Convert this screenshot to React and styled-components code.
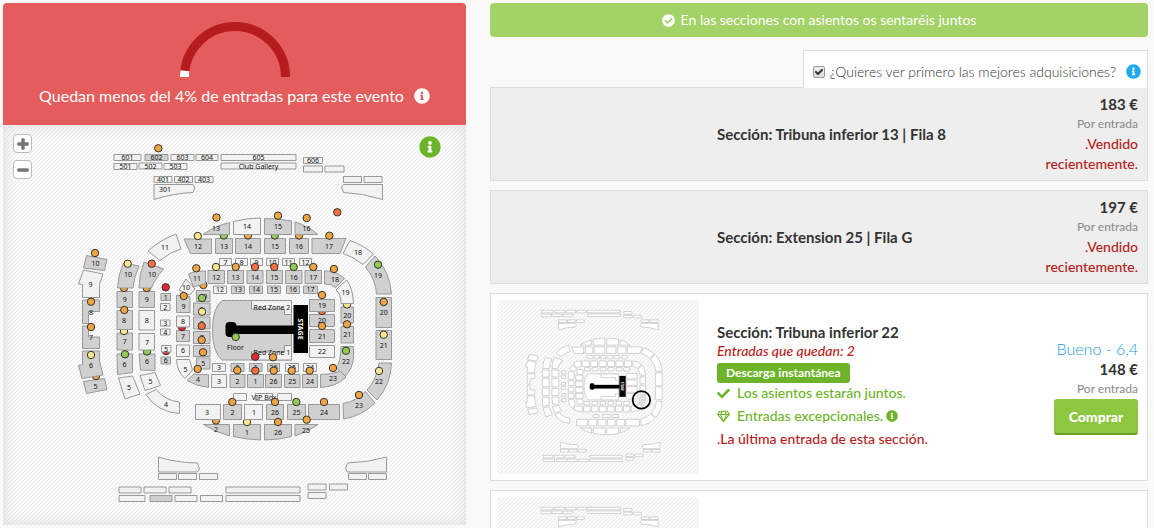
import React from "react";
import styled, { createGlobalStyle } from "styled-components";
import {
  FaCheck,
  FaCheckCircle,
  FaInfoCircle,
  FaMinus,
  FaPlus,
  FaRegGem,
} from "react-icons/fa";

const GlobalStyle = createGlobalStyle`
  body {
    margin: 0;
    background-color: #f9f9f9;
    color: #333;
    font-family: Lato, "Noto Sans", sans-serif;
    font-size: 14px;
    line-height: 20px;
  }

  * {
    box-sizing: border-box;
  }
`;

const colors = {
  o: "#f0a540",
  y: "#fde68c",
  g: "#92cc54",
  t: "#f9703e",
  r: "#e3262f",
};

// [x, y, width, height, label, sold by us]
const blocks = [
  [114, 154.5, 27, 6, "601"],
  [145, 154.5, 23, 6, "602", true],
  [171, 154.5, 23, 6, "603"],
  [196, 154.5, 22, 6, "604"],
  [221, 154.5, 75, 6, "605"],
  [114, 163.5, 23, 6, "501"],
  [139, 163, 23, 6, "502"],
  [164, 163.5, 23, 6, "503"],
  [221, 163, 75, 6, "Club Gallery"],
  [303.5, 157.5, 19, 6, "606"],
  [303.5, 166, 19, 6],
  [325, 166, 19, 6],
  [154, 176.5, 18, 6, "401"],
  [174.5, 176.5, 18, 6, "402"],
  [195, 176.5, 18, 6, "403"],
  [343.5, 176.5, 18, 6],
  [364, 176.5, 18, 6],
  [158.5, 473.5, 18, 6],
  [178.5, 473.5, 18, 6],
  [199.5, 473.5, 18, 6],
  [119, 487, 22, 6],
  [144, 487, 22, 6],
  [169, 487, 22, 6],
  [119, 495.5, 26, 6],
  [150, 495.5, 22, 6, "", true],
  [175, 495.5, 22, 6],
  [200.5, 495.5, 22, 6],
  [226, 487, 74, 6],
  [226, 495.5, 74, 6],
  [308, 484, 18, 6],
  [329.5, 484, 18, 6],
  [308, 492.5, 18, 6],
  [348.5, 473.5, 18, 6],
  [368.5, 473.5, 18, 6],
  [215.5, 238.5, 17, 15, "13", true],
  [235.5, 238.5, 25, 15, "14", true],
  [264.5, 238.5, 21, 15, "15", true],
  [289.5, 238.5, 19, 15, "16", true],
  [376, 297.5, 15.5, 30, "20", true],
  [376, 330.5, 15.5, 29, "21", true],
  [308.5, 404.5, 31, 15, "24", true],
  [287.5, 404.5, 18, 15, "25", true],
  [266.5, 404.5, 17, 15, "26", true],
  [223.5, 404.5, 18, 15, "2", true],
  [117, 291.5, 15.5, 16, "9", true],
  [117, 333, 15.5, 17, "7", true],
  [139, 291.5, 15.5, 16, "9", true],
  [139, 310.5, 15.5, 19.5, "8"],
  [161, 293.5, 9.5, 7, "1", true],
  [160.5, 303.5, 9.5, 7, "2"],
  [160.5, 320, 9.5, 6, "3"],
  [160.5, 329, 9.5, 6, "4"],
  [161, 357, 9.5, 7, "6", true],
  [176.5, 330.5, 13, 11, "7", true],
  [176.5, 345, 13, 11.5, "6"],
  [196.5, 290.5, 13.5, 11, "10", true],
  [193.5, 303, 16.5, 12, "9", true],
  [193.5, 317, 16.5, 12, "8", true],
  [193.5, 331.5, 16.5, 12, "7", true],
  [193.5, 345.5, 16.5, 11, "6", true],
  [196.5, 358, 13.5, 11, "5", true],
  [219.5, 258.5, 12, 7, "7"],
  [235.5, 258.5, 12, 7, "8"],
  [250.5, 258.5, 12, 7, "9"],
  [266.5, 258.5, 12, 7, "10"],
  [282.5, 258.5, 12, 7, "11"],
  [299.5, 258.5, 12, 7, "12"],
  [208, 270.5, 16.5, 13, "12", true],
  [227.5, 270.5, 16, 13, "13", true],
  [247, 270.5, 16, 13, "14", true],
  [266.5, 270.5, 16, 13, "15", true],
  [285.5, 270.5, 16.5, 13, "16", true],
  [305, 270.5, 16.5, 13, "17", true],
  [213.5, 286, 13, 7.5, "12"],
  [231.5, 286, 13, 7.5, "13", true],
  [249.5, 286, 13, 7.5, "14", true],
  [267.5, 286, 13, 7.5, "15", true],
  [286.5, 286, 13, 7.5, "16", true],
  [303.5, 286, 14, 7.5, "17", true],
  [309.5, 314.5, 25, 12, "20", true],
  [309.5, 329.5, 25, 13, "21", true],
  [309.5, 345.5, 25, 12, "22"],
  [341, 307, 12.5, 16, "20", true],
  [341, 326.5, 12.5, 16.5, "21", true],
  [302.5, 374.5, 15, 13, "24", true],
  [284.5, 374.5, 15.5, 13, "25", true],
  [265.5, 374.5, 16, 13, "26", true],
  [247.5, 374.5, 16, 13, "1", true],
  [230, 374.5, 15, 13, "2", true],
  [211.5, 374.5, 15, 13, "3"],
  [212.5, 363.5, 13, 8, "3"],
  [231, 363.5, 13, 8, "2", true],
  [249.5, 363.5, 12.5, 8, "1", true],
  [267.5, 363.5, 12, 8, "26", true],
  [285.5, 363.5, 13, 8, "25"],
  [303.5, 363.5, 13, 8, "24"],
  [233.5, 393.5, 13, 7],
  [255.5, 393.5, 17, 7, "VIP Box"],
  [277.5, 393.5, 14, 7],
];

// [path, label, label x, label y, sold by us]
const shapes = [
  ["M154 184.5H193L195 188L193 192.5Q175 193 154 199.5Z", "301", 165, 189],
  ["M382.5 184.5H343.5L341.5 187L343.5 192.5Q362 193 382.5 199.5Z"],
  ["M158.5 457Q175 462.5 197.5 463L199.5 469L197.5 472H158.5Z"],
  ["M386.5 457Q368 462.5 347.5 463L345.5 469L347.5 472H386.5Z"],
  ["M184 239H211.5V253.5H190.5Z", "12", 198, 246, true],
  ["M312 238.5H346L340 253.5H312Z", "17", 329, 246, true],
  ["M350 240.5Q363 245 373.5 254L363 264.5Q354 257 343 253.5Z", "18", 358, 252],
  ["M375 256Q390 272 391.5 294H376.5Q376 280 365.5 267Z", "19", 378, 275, true],
  ["M379 363H391.5Q391 384 377 400L367 390Q377 379 379 363Z", "22", 379, 381, true],
  ["M343 403.5Q357 401 365.5 391.5L375 403Q362 416 343.5 419Z", "23", 359, 405, true],
  ["M203.5 424.5H229.5V436Q215 432 203.5 424.5Z", "2", 216, 429, true],
  ["M233.5 424.5H260.5V440Q246 439.5 233.5 436.5Z", "1", 247, 432, true],
  ["M264.5 424.5H291.5V436.5Q278 440 264.5 440Z", "26", 278, 432, true],
  ["M295 424.5H318Q308 432 295 436Z", "25", 306, 430, true],
  ["M148 251Q160 240 176 234L181 249Q170 252 160 260.5Z", "11", 165, 247],
  ["M117 354H132.5V372.5L117.5 374.5Z", "6", 124.5, 364, true],
  ["M139 354H155V370.5L140.5 370Z", "6", 147, 361, true],
  ["M118.5 378L132.5 376L140 394L125 399Z", "5", 129, 387],
  ["M140 375.5L155 372.5L160.5 385.5L145 390.5Z", "5", 150.5, 381],
  ["M146 394.5L156 389.5Q166 401 179.5 402V413.5Q157 412 146 394.5Z", "4", 166, 404],
  ["M86.5 255.5L107 259.5L104.5 270.5L83.5 268Z", "10", 95.5, 263, true],
  ["M83.5 270L103 274L99.5 284.5V297.5H82.5V284.5L78.5 284Z", "9", 90.5, 284],
  ["M82.5 300H99.5V311.5H88.5V323.5H82.5Z", "8", 91, 312, true],
  ["M82.5 326H88.5V337H99.5V348.5H82.5Z", "7", 91, 337, true],
  ["M83.5 381.5L104.5 378.5L107 389.5L86.5 393.5Z", "5", 95.5, 386, true],
  ["M179 290L186 279L195 289L190 295Z", "10", 186, 287],
  ["M176.5 295.5Q184 294 190 297V312.5H176.5Z", "9", 183.5, 306, true],
  ["M176.5 359.5H189.5L192.5 370L185 378.5Q177 372 176.5 359.5Z", "5", 185.5, 369],
  ["M187 380.5L194 374Q200 375 208.5 374.5V387.5Q196 386 187 380.5Z", "4", 198, 379, true],
  ["M324.5 271Q335 270 344.5 278.5L335.5 287.5Q331 283.5 324.5 284Z", "18", 335, 279, true],
  ["M341 346.5H353.5V357Q353 368 345.5 376L336 367.5Q341 362 341 346.5Z", "22", 346, 361, true],
  ["M320.5 374.5Q334 374 340 371L346 377Q336 387 320.5 387.5Z", "23", 333, 378, true],
];

// sections that cover the lower half-hidden markers
const frontShapes = [
  ["M203 234.5Q215 226 229.5 222.5V234.5Z", "13", 216, 228, true],
  ["M233.5 234.5V221.5Q247 218 260.5 218V234.5Z", "14", 247, 226],
  ["M264.5 234.5V218.5Q280 218.5 291.5 221V234.5Z", "15", 278, 226, true],
  ["M295 234.5V222Q308 226 318 234.5Z", "16", 306.5, 228, true],
  ["M144 262L163.5 269Q153.5 281 151.5 288H139Q139 275 144 262Z", "10", 152, 274, true],
  ["M123.5 263L139 266Q134 277 133 288H117.5Q118 275 123.5 263Z", "10", 128, 274, true],
  ["M117 310.5H132.5V329.5H117Z", "8", 124, 320, true],
  ["M139 333.5H154.5V350H139Z", "7", 147, 342],
  ["M82.5 351H99.5V361L103 375L82 378.5L78.5 365H82.5Z", "6", 91, 365, true],
  ["M176.5 316H189.5V327H176.5Z", "8", 183, 321],
  ["M161.5 345.5H171V352H161.5Z", "5", 166, 349],
  ["M195.5 404.5H220.5V419.5H195.5Z", "3", 207, 412],
  ["M244.5 404.5H262.5V419.5H244.5Z", "1", 254, 412],
  ["M188.5 274Q196 270 205.5 271V283.5L193.5 287Z", "11", 197, 278, true],
  ["M346.5 280Q353 288 353.5 303.5H341Q341 294 336 290Z", "19", 345.5, 292],
  ["M309.5 299.5H334.5V311.5H309.5Z", "19", 322, 305, true],
];

const backMarkers = [
  [223.8, 235.5, "g"], [248, 235.5, "o"], [274.8, 235.5, "g"], [299, 235.5, "o"],
  [124, 288, "o"], [146.7, 288, "o"], [124, 331, "y"], [147, 351.5, "g"],
  [96, 376, "o"], [182, 327, "r"], [166, 351, "r"], [216, 420.5, "o"],
  [247, 422, "y"], [203.3, 285, "o"], [347, 304.5, "y"], [322, 311, "t"],
];

const markers = [
  [158.3, 148.3, "o"], [216.5, 217.5, "o"], [197.8, 236, "y"], [95, 253, "o"],
  [127.7, 263.7, "y"], [151.7, 263.7, "t"], [165.7, 287.3, "r"], [196.3, 268.3, "o"],
  [216, 267, "y"], [235.7, 267, "o"], [183.7, 296, "o"], [202, 298, "g"],
  [278, 215.7, "o"], [306.7, 218, "o"], [337.3, 212.3, "t"], [329.3, 235.7, "o"],
  [378, 264.7, "g"], [255, 267, "t"], [274.3, 267, "t"], [293.7, 267, "g"],
  [313.3, 267, "o"], [334, 269, "o"], [322, 295, "o"], [91, 301.7, "o"],
  [91, 327, "o"], [91, 355, "y"], [124.3, 310, "o"], [125, 354.3, "g"],
  [202, 311.7, "y"], [201.7, 326, "t"], [201.7, 340, "o"], [203, 352.3, "o"],
  [197.7, 369, "o"], [235.7, 337, "g"], [237.3, 370.3, "o"], [232.3, 402, "o"],
  [383.7, 302, "o"], [383.7, 334.7, "y"], [379, 371, "y"], [322, 326, "o"],
  [347, 324.3, "o"], [346, 350.7, "g"], [333, 368, "o"], [255.3, 356.7, "r"],
  [273, 357.3, "o"], [255.3, 370.7, "t"], [273.7, 370.7, "o"], [291.7, 370.7, "o"],
  [309.7, 370.7, "o"], [275, 402, "o"], [296.3, 402, "g"], [324, 402, "o"],
  [359, 395, "o"], [278, 422, "o"], [306.7, 419.7, "o"],
];

const MapSvg = styled.svg`
  display: block;
  width: 100%;
  height: auto;
`;

const SectionPath = styled.path`
  fill: ${({ $mini, $sold }) => ($mini ? "#fff" : $sold ? "#d0d0d0" : "#f2f2f2")};
  stroke: ${({ $mini }) => ($mini ? "#ccc" : "#999")};
  stroke-width: ${({ $mini }) => ($mini ? 2 : 1)};
`;

const Marker = styled.circle`
  fill: ${({ $tone }) => colors[$tone]};
  stroke: #333;
  stroke-width: 1;
`;

const MapLabel = styled.text`
  fill: ${({ $light }) => ($light ? "#fff" : "#111")};
  font-family: "Noto Sans", sans-serif;
  font-size: 7px;
  font-weight: ${({ $light }) => ($light ? 700 : 400)};
  text-anchor: middle;
  dominant-baseline: central;
`;

const toPath = ([x, y, w, h]) => `M${x} ${y}h${w}v${h}h${-w}Z`;

const Sections = ({ list, mini }) =>
  list.map(([d, , , , sold], i) => (
    <SectionPath key={i} d={d} $sold={sold} $mini={mini} />
  ));

const Markers = ({ list }) =>
  list.map(([x, y, tone], i) => (
    <Marker key={i} cx={x} cy={y} r="3.7" $tone={tone} />
  ));

const blockShapes = blocks.map((b) => [
  toPath(b),
  b[4],
  b[0] + b[2] / 2,
  b[1] + b[3] / 2,
  b[5],
]);

const VenueMap = ({ mini, selected }) => (
  <MapSvg
    viewBox={mini ? "13 131 463 399" : "3 125 463 400"}
    role="img"
    aria-label="Plano"
  >
    <Sections list={blockShapes} mini={mini} />
    <Sections list={shapes} mini={mini} />
    {!mini && <Markers list={backMarkers} />}
    <Sections list={frontShapes} mini={mini} />
    <SectionPath
      d="M222 300.5H291.5V360H222Q212.5 352 212.5 330Q212.5 308 222 300.5Z"
      $sold
      $mini={mini}
    />
    <SectionPath d="M251.5 300.5H291.5V314.5H284.5V309H251.5Z" $mini={mini} />
    <SectionPath d="M251.5 360H291.5V345.5H284.5V352H251.5Z" $mini={mini} />
    <rect x="225.5" y="322" width="11" height="15" rx="4" />
    <rect x="230" y="325.5" width="64" height="8.5" />
    <rect x="293.5" y="305" width="14.5" height="48" />
    {!mini &&
      [...blockShapes, ...shapes, ...frontShapes]
        .filter((s) => s[1])
        .map(([, label, x, y], i) => (
          <MapLabel key={i} x={x} y={y}>
            {label}
          </MapLabel>
        ))}
    {!mini && (
      <>
        <MapLabel x="272" y="307">Red Zone 2</MapLabel>
        <MapLabel x="272" y="352">Red Zone 1</MapLabel>
        <MapLabel x="235.5" y="347">Floor</MapLabel>
        <Markers list={markers} />
      </>
    )}
    {(!mini || selected) && (
      <MapLabel $light transform="translate(300 329) rotate(90)">
        STAGE
      </MapLabel>
    )}
    {selected && (
      <>
        <path
          d="M341 346.5H353.5V357Q353 368 345.5 376L336 367.5Q341 362 341 346.5Z"
          fill="#ddd"
        />
        <circle cx="344" cy="360" r="20" fill="none" stroke="#000" strokeWidth="4" />
      </>
    )}
  </MapSvg>
);

const Page = styled.main`
  display: grid;
  grid-template-columns: 463fr 658fr;
  align-items: start;
  gap: 24px;
  padding: 3px 6px 3px 3px;
`;

const AlertBox = styled.div`
  display: flex;
  flex-direction: column;
  align-items: center;
  padding: 19px 10px 17px;
  background-color: #e55c5c;
  border-radius: 4px 4px 0 0;
  color: #fff;
`;

const Gauge = styled.svg`
  display: block;
  width: 110px;
  height: 55px;
`;

const AlertText = styled.p`
  display: flex;
  align-items: center;
  gap: 10px;
  margin: 7px 0 0;
  font-size: 16px;
  line-height: 24px;
`;

const MapBox = styled.div`
  position: relative;
  background-color: #fafafa;
  background-image: linear-gradient(135deg, transparent 40%, #ebebeb 40%, #ebebeb 60%, transparent 60%);
  background-size: 4px 4px;
  box-shadow: inset 0 0 16px rgba(60, 30, 60, 0.12);
`;

const MapControls = styled.div`
  position: absolute;
  top: 9px;
  left: 10px;
  display: grid;
  gap: 7px;
`;

const MapButton = styled.button`
  display: flex;
  align-items: center;
  justify-content: center;
  width: 19px;
  height: 19px;
  padding: 0;
  border: 1px solid #bbb;
  border-radius: 4px;
  background-color: #fff;
  color: #777;
  font-size: 12px;

  svg {
    overflow: visible;
    stroke-width: 50px;
  }
`;

const MapInfo = styled.a`
  position: absolute;
  top: 11px;
  right: 25px;
  display: flex;
  border-radius: 50%;
  background-color: #fff;
  color: #6eb42a;
  font-size: 22px;
`;

const Banner = styled.div`
  display: flex;
  align-items: center;
  justify-content: center;
  gap: 6px;
  padding: 7px;
  margin-bottom: 13px;
  border-radius: 4px;
  background-color: #a3d267;
  color: #fff;
`;

const BestTab = styled.div`
  position: relative;
  display: flex;
  align-items: center;
  width: fit-content;
  height: 38px;
  padding: 4px 6px 0 9px;
  margin: 0 0 -1px auto;
  border: 1px solid #ddd;
  border-bottom: 0;
  background-color: #fff;
`;

const TickLabel = styled.label`
  position: relative;
  display: flex;
  align-items: center;
  gap: 5px;
  font-weight: 300;
`;

const Tick = styled.input`
  appearance: none;
  width: 12px;
  height: 12px;
  margin: 0;
  border: 1px solid #999;
  border-radius: 2px;
  background-image: linear-gradient(#f0f0f0, #ddd);

  & + svg {
    position: absolute;
    top: 6px;
    left: 2px;
    width: 8px;
    height: 8px;
    stroke-width: 50px;
    pointer-events: none;
    visibility: hidden;
  }

  &:checked + svg {
    visibility: visible;
  }
`;

const BlueInfo = styled(FaInfoCircle)`
  margin-left: 10px;
  color: #1eaaf1;
  font-size: 15px;
`;

const TicketList = styled.div`
  display: grid;
  gap: 9px;
`;

const Ticket = styled.article`
  display: grid;
  grid-template-columns: 202px 1fr 100px;
  align-items: center;
  gap: 18px;
  padding: 6px 9px 6px 6px;
  border: 1px solid #ddd;
  background-color: ${({ $sold }) => ($sold ? "#eee" : "#fff")};
`;

const Thumb = styled(MapBox)`
  box-shadow: none;
`;

const TicketTitle = styled.h2`
  margin: 0;
  font-size: 15px;
  font-weight: 700;
  line-height: 20px;
`;

const Left = styled.em`
  display: block;
  color: #b71c1c;
  font-size: 14px;
  font-weight: 500;
  line-height: 18px;
`;

const Badge = styled.span`
  display: block;
  width: fit-content;
  margin-top: 3px;
  padding: 0 9px;
  border-radius: 3px;
  background-color: #6eb42a;
  color: #fff;
  font-size: 12px;
  font-weight: 700;
  line-height: 20px;
`;

const Perk = styled.p`
  display: flex;
  align-items: center;
  gap: 7px;
  margin: 0 0 3px;
  color: ${({ $warn }) => ($warn ? "#b71c1c" : "#6eb42a")};
  font-size: 14px;
  font-weight: 500;

  svg {
    font-size: 13px;
  }

  span + svg {
    margin-left: -4px;
    font-size: 12px;
  }
`;

const PriceBox = styled.div`
  display: flex;
  flex-direction: column;
  align-items: flex-end;
  text-align: right;
`;

const Rating = styled.span`
  color: #1b9be0;
  font-size: 16px;
  font-weight: 300;
`;

const Price = styled.strong`
  font-size: 15px;
  font-weight: 700;
`;

const PerTicket = styled.span`
  color: #888;
  font-size: 12px;
`;

const SoldText = styled.span`
  color: #b71c1c;
  font-weight: 500;
`;

const BuyButton = styled.button`
  width: 84px;
  height: 36px;
  padding: 0;
  border: 0;
  border-bottom: 2px solid #6a9f27;
  border-radius: 3px;
  background-color: #8dc63f;
  color: #fff;
  font-family: inherit;
  font-size: 14px;
  font-weight: 900;
`;

const AlertPanel = () => {
  return (
    <AlertBox>
      <Gauge viewBox="0 0 110 55">
        <path d="M4.5 55A50.5 50.5 0 0 1 105.5 55" fill="none" stroke="#b71c1c" strokeWidth="9" />
        <path d="M4.5 55A50.5 50.5 0 0 1 4.9 48.7" fill="none" stroke="#fff" strokeWidth="9" />
      </Gauge>
      <AlertText>
        Quedan menos del 4% de entradas para este evento
        <FaInfoCircle />
      </AlertText>
    </AlertBox>
  );
};

const MapPanel = () => {
  return (
    <section>
      <AlertPanel />
      <MapBox>
        <VenueMap />
        <MapControls>
          <MapButton aria-label="Acercar">
            <FaPlus />
          </MapButton>
          <MapButton aria-label="Alejar">
            <FaMinus />
          </MapButton>
        </MapControls>
        <MapInfo href="#info" aria-label="Información">
          <FaInfoCircle />
        </MapInfo>
      </MapBox>
    </section>
  );
};

const SoldTicket = ({ title, price }) => {
  return (
    <Ticket $sold>
      <span />
      <TicketTitle>{title}</TicketTitle>
      <PriceBox>
        <Price>{price}</Price>
        <PerTicket>Por entrada</PerTicket>
        <SoldText>.Vendido recientemente.</SoldText>
      </PriceBox>
    </Ticket>
  );
};

export default function App() {
  return (
    <>
      <GlobalStyle />
      <Page>
        <MapPanel />
        <section>
          <Banner>
            <FaCheckCircle size={13} />
            En las secciones con asientos os sentaréis juntos
          </Banner>
          <BestTab>
            <TickLabel>
              <Tick type="checkbox" defaultChecked />
              <FaCheck />
              ¿Quieres ver primero las mejores adquisiciones?
            </TickLabel>
            <BlueInfo />
          </BestTab>
          <TicketList>
            <SoldTicket title="Sección: Tribuna inferior 13 | Fila 8" price="183 €" />
            <SoldTicket title="Sección: Extension 25 | Fila G" price="197 €" />
            <Ticket>
              <Thumb>
                <VenueMap mini selected />
              </Thumb>
              <div>
                <TicketTitle>Sección: Tribuna inferior 22</TicketTitle>
                <Left>Entradas que quedan: 2</Left>
                <Badge>Descarga instantánea</Badge>
                <Perk>
                  <FaCheck />
                  Los asientos estarán juntos.
                </Perk>
                <Perk>
                  <FaRegGem />
                  <span>Entradas excepcionales.</span>
                  <FaInfoCircle />
                </Perk>
                <Perk $warn>.La última entrada de esta sección.</Perk>
              </div>
              <PriceBox>
                <Rating>Bueno - 6,4</Rating>
                <Price>148 €</Price>
                <PerTicket>Por entrada</PerTicket>
                <BuyButton>Comprar</BuyButton>
              </PriceBox>
            </Ticket>
            <Ticket>
              <Thumb>
                <VenueMap mini />
              </Thumb>
            </Ticket>
          </TicketList>
        </section>
      </Page>
    </>
  );
}
